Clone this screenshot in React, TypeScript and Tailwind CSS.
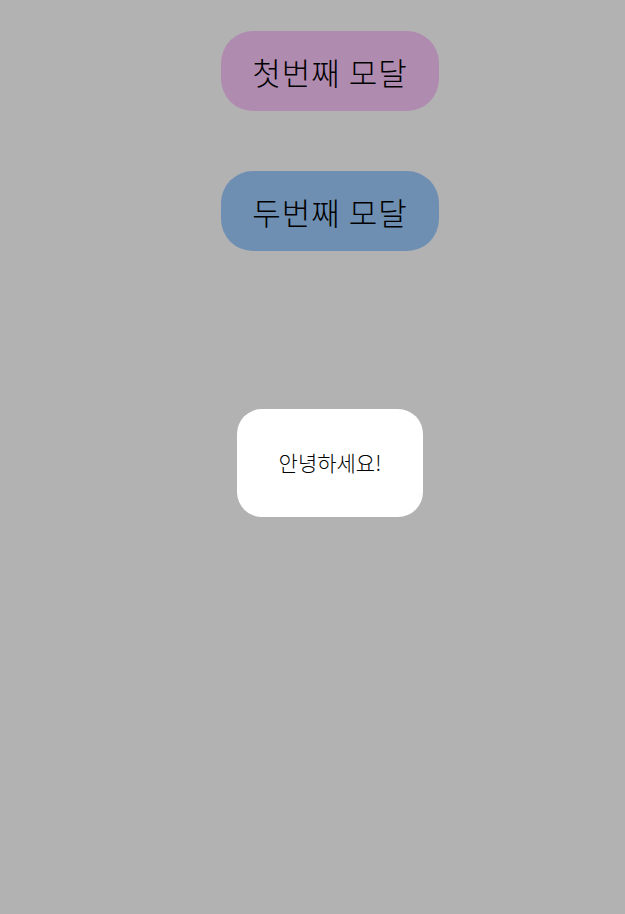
import React from 'react';

const font = { fontFamily: '"Noto Sans CJK KR", "Noto Sans", sans-serif' };

export default function App() {
  return (
    <div className="relative min-h-[914px] w-full bg-white" style={font}>
      {/* Page content */}
      <div className="flex flex-col items-center gap-[60px] pt-[31px] pl-[35px]">
        <button className="w-[218px] h-[80px] rounded-[32px] bg-[#fdc8fd] text-[31px] tracking-[1px] font-light text-black leading-none">
          첫번째 모달
        </button>
        <button className="w-[218px] h-[80px] rounded-[32px] bg-[#9ecdff] text-[31px] tracking-[1px] font-light text-black leading-none">
          두번째 모달
        </button>
      </div>

      {/* Overlay + modal */}
      <div className="fixed inset-0 bg-black/30 flex items-center justify-center pl-[35px] pt-[12px]">
        <div className="w-[186px] h-[108px] rounded-[25px] bg-white flex items-center justify-center text-[21px] font-light text-black">
          안녕하세요!
        </div>
      </div>
    </div>
  );
}
